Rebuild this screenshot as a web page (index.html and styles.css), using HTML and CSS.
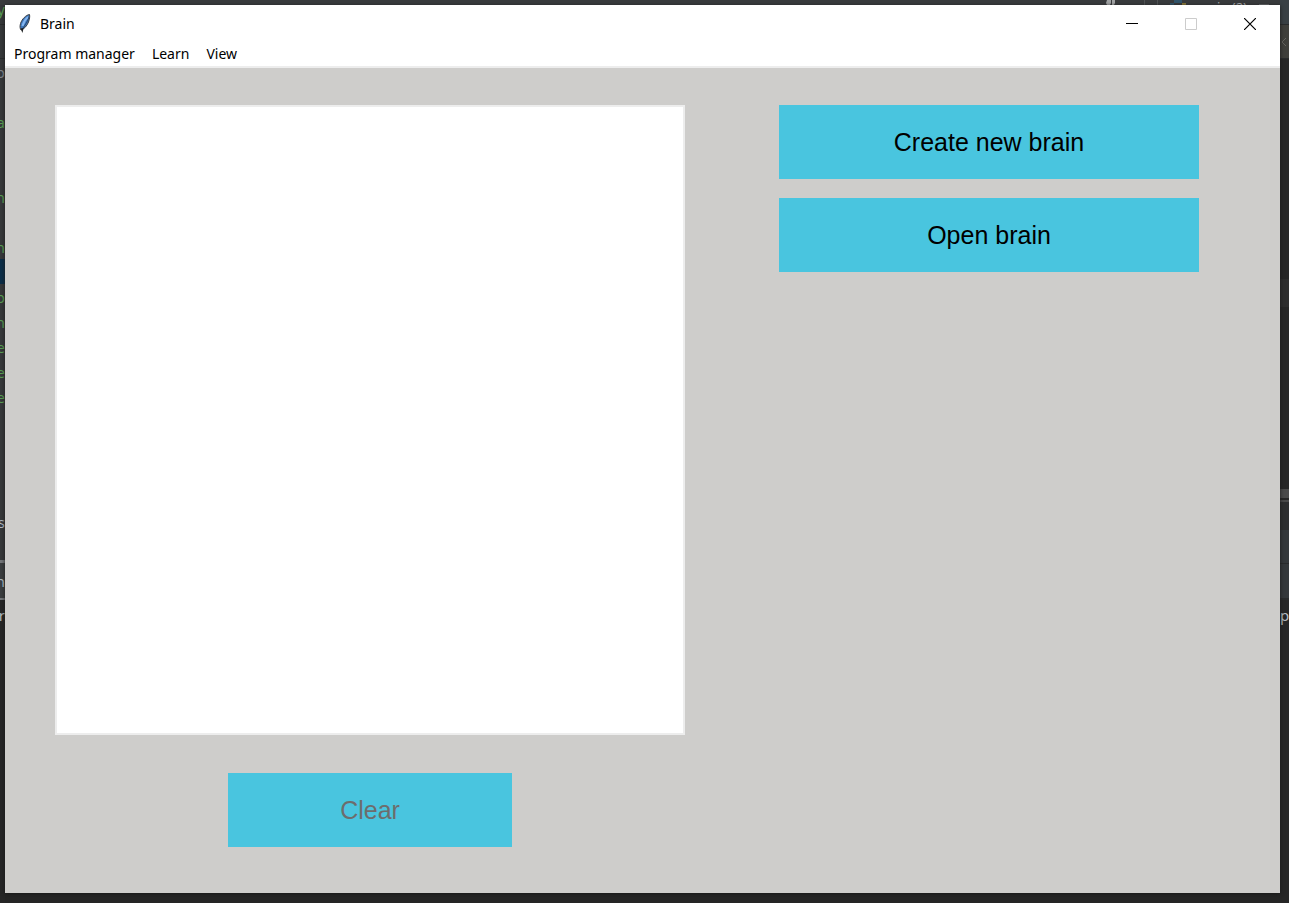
FILE: index.html
```html
<!DOCTYPE html>
<html lang="en">
<head>
<meta charset="utf-8">
<title>Brain</title>
<link rel="stylesheet" href="styles.css">
</head>
<body>
<div class="desktop">
  <div class="editor" aria-hidden="true">
    <div class="edge edge-left">
      <div class="tab comment">y</div>
      <div class="crumb"></div>
      <div class="line muted">p</div>
      <div class="line"></div>
      <div class="line comment">a</div>
      <div class="line"></div>
      <div class="line"></div>
      <div class="line comment">n</div>
      <div class="line"></div>
      <div class="line comment">n</div>
      <div class="line selected"></div>
      <div class="line comment">p</div>
      <div class="line comment">n</div>
      <div class="line comment">e</div>
      <div class="line comment">e</div>
      <div class="line comment">e</div>
      <div class="line"></div>
      <div class="line"></div>
      <div class="line"></div>
      <div class="line"></div>
      <div class="line code">s</div>
      <div class="splitter"></div>
      <div class="panel-tab code">n</div>
      <div class="console code">r</div>
    </div>
    <div class="edge edge-right">
      <div class="tab"></div>
      <div class="crumb">
        <svg width="7" height="10" viewBox="0 0 7 10"><path d="M6 1L2 5l4 4" fill="none" stroke="#65645f"/></svg>
      </div>
      <div class="gutter"></div>
      <div class="caret-row"></div>
      <div class="gutter-rest"></div>
      <div class="scroll"></div>
      <div class="status"></div>
      <div class="panel-head"></div>
      <div class="panel-tab"></div>
      <div class="console code">p</div>
    </div>
    <div class="toolbar">
      <svg width="10" height="5" viewBox="0 0 10 5"><path d="M1 0h4v3l-1 2H1L0 3zM6 0h3v3l-1 2H6z" fill="#a2a4a5"/></svg>
      <span class="rule"></span>
      <span class="rule"></span>
      <svg width="16" height="5" viewBox="0 0 16 5"><path d="M4 0h8v3H4v2H0V3h4z" fill="#31546b"/><path d="M12 3h4v2h-4z" fill="#8a7a3a"/></svg>
      <span class="run-name">main (2)</span>
      <span class="dash"></span>
    </div>
  </div>

  <main class="window">
    <header class="titlebar">
      <svg class="feather" width="16" height="22" viewBox="0 0 16 22">
        <path d="M12.500 1.500C9 2 5 6 3.500 10.500c-.8 3-.5 5 .5 6.500 3-1 6-4 7.500-8 1-3 1.500-5.500 1-7.500z" fill="#3f78bd" stroke="#3a3d42"/>
        <path d="M11 4C8.500 6 6.500 9 5.500 13" fill="none" stroke="#83b5ef" stroke-width="2"/>
        <path d="M12 4C11 8 8 12 5.500 16" fill="none" stroke="#27476f"/>
        <path d="M3.500 15.500l3-.5-1 5z" fill="#1d2022"/>
      </svg>
      <h1 class="title">Brain</h1>
      <div class="controls">
        <button class="control" type="button" aria-label="Minimize"><svg width="12" height="12" viewBox="0 0 12 12"><path d="M0 5.500h12" stroke="#000"/></svg></button>
        <button class="control" type="button" aria-label="Maximize" disabled><svg width="12" height="12" viewBox="0 0 12 12"><path d="M.5.5h11v11H.5z" fill="none" stroke="#ccc"/></svg></button>
        <button class="control" type="button" aria-label="Close"><svg width="12" height="12" viewBox="0 0 12 12"><path d="M0 0l12 12M12 0L0 12" stroke="#000" stroke-width="1.200"/></svg></button>
      </div>
    </header>
    <nav class="menubar" aria-label="Main menu">
      <button class="menu" type="button">Program manager</button>
      <button class="menu" type="button">Learn</button>
      <button class="menu" type="button">View</button>
    </nav>
    <div class="content">
      <section class="drawing">
        <canvas class="board" aria-label="Drawing area"></canvas>
        <button class="action clear" type="button" disabled>Clear</button>
      </section>
      <section class="actions">
        <button class="action" type="button">Create new brain</button>
        <button class="action" type="button">Open brain</button>
      </section>
    </div>
  </main>
</div>
</body>
</html>
```
FILE: styles.css
```css
* { box-sizing: border-box; }

body {
  margin: 0;
  font-family: "Noto Sans", "Open Sans", sans-serif;
  font-size: 14px;
}

button {
  border: 0;
  margin: 0;
  padding: 0;
  background: none;
  color: #000;
  font: inherit;
}

svg { display: block; flex: none; }

.desktop {
  position: relative;
  display: flex;
  min-height: 100vh;
  padding: 5px 9px 10px 5px;
  background: #252525;
  overflow: hidden;
}

/* Editor visible behind the window */
.editor {
  position: absolute;
  inset: 0;
  overflow: hidden;
}

.edge {
  position: absolute;
  top: 0;
  bottom: 0;
  display: flex;
  flex-direction: column;
  overflow: hidden;
  font-size: 15px;
}

.edge > div { flex: none; display: flex; align-items: center; }

.edge-left { left: 0; width: 5px; background: #36383a; }
.edge-left > div { justify-content: flex-end; }
.edge-right { right: 0; width: 9px; background: #262626; }

.comment { color: #5a9e53; }
.muted { color: #85888b; }
.code { color: #b4bcc2; }

.tab { height: 25px; border-bottom: 1px solid #292b2c; }
.edge-left .tab { padding-bottom: 6px; }
.crumb { height: 34px; border-bottom: 1px solid #292b2c; }
.line { height: 25px; }
.selected { background: #0b2d48; }
.splitter { height: 29px; border-bottom: 3px solid #74777a; }
.panel-tab { height: 37px; border-bottom: 2px solid #74777a; background: #3a3d3f; }
.edge > .console { flex: 1; align-items: flex-start; padding-top: 5px; background: #262626; }

.edge-right .tab { background: #394044; }
.edge-right .crumb { background: #3f3f3b; }
.gutter { height: 220px; }
.caret-row { height: 28px; background: #2d2d2d; }
.gutter-rest { height: 182px; }
.scroll { height: 13px; border-top: 9px solid #4a4a4a; border-bottom: 2px solid #4a4a4a; }
.status { height: 28px; background: #2d2e2f; }
.panel-head { height: 34px; border-bottom: 1px solid #292b2c; background: #34383b; }
.edge-right .panel-tab { height: 36px; border-color: #292b2c; background: #34383b; }

.toolbar {
  position: absolute;
  top: 0;
  left: 0;
  right: 9px;
  height: 5px;
  display: flex;
  justify-content: flex-end;
  gap: 12px;
  padding-right: 11px;
  background: #393b3d;
  overflow: hidden;
}

.rule { width: 1px; background: #505355; }
.toolbar .rule:first-of-type { margin-left: 16px; }
.run-name { color: #b0b2b3; font-size: 13px; line-height: 14px; }
.dash { width: 10px; height: 1px; margin-top: 4px; background: #66696b; }

/* Application window */
.window {
  position: relative;
  flex: 1;
  display: flex;
  flex-direction: column;
  background: #cecdcb;
  box-shadow: 0 1px 4px #191919;
}

.titlebar {
  display: flex;
  align-items: center;
  height: 37px;
  padding-left: 12px;
  background: #fff;
}

.title { margin: 0 0 0 7px; font-size: 14px; font-weight: 400; }
.controls { display: flex; align-self: stretch; margin-left: auto; padding-right: 1px; }
.control { display: grid; place-items: center; width: 59px; }

.menubar {
  display: flex;
  height: 26px;
  gap: 17px;
  padding: 0 9px;
  border-bottom: 2px solid #ededed;
  background: #fff;
}

.menu { font-size: 14px; line-height: 20px; }

.content {
  flex: 1;
  display: grid;
  grid-template-columns: 3fr 2fr;
  align-items: start;
  column-gap: 94px;
  padding: 37px 81px 46px 50px;
}

.drawing { display: flex; flex-direction: column; align-items: center; gap: 38px; }

.board {
  display: block;
  width: 100%;
  aspect-ratio: 1;
  border: 2px solid #ededed;
  background: #fff;
}

.actions { display: grid; gap: 19px; }

.action {
  height: 74px;
  background: #49c5df;
  font-family: "Liberation Sans", Arial, sans-serif;
  font-size: 25px;
}

.clear { width: 45%; color: #6d6d6d; }
```
